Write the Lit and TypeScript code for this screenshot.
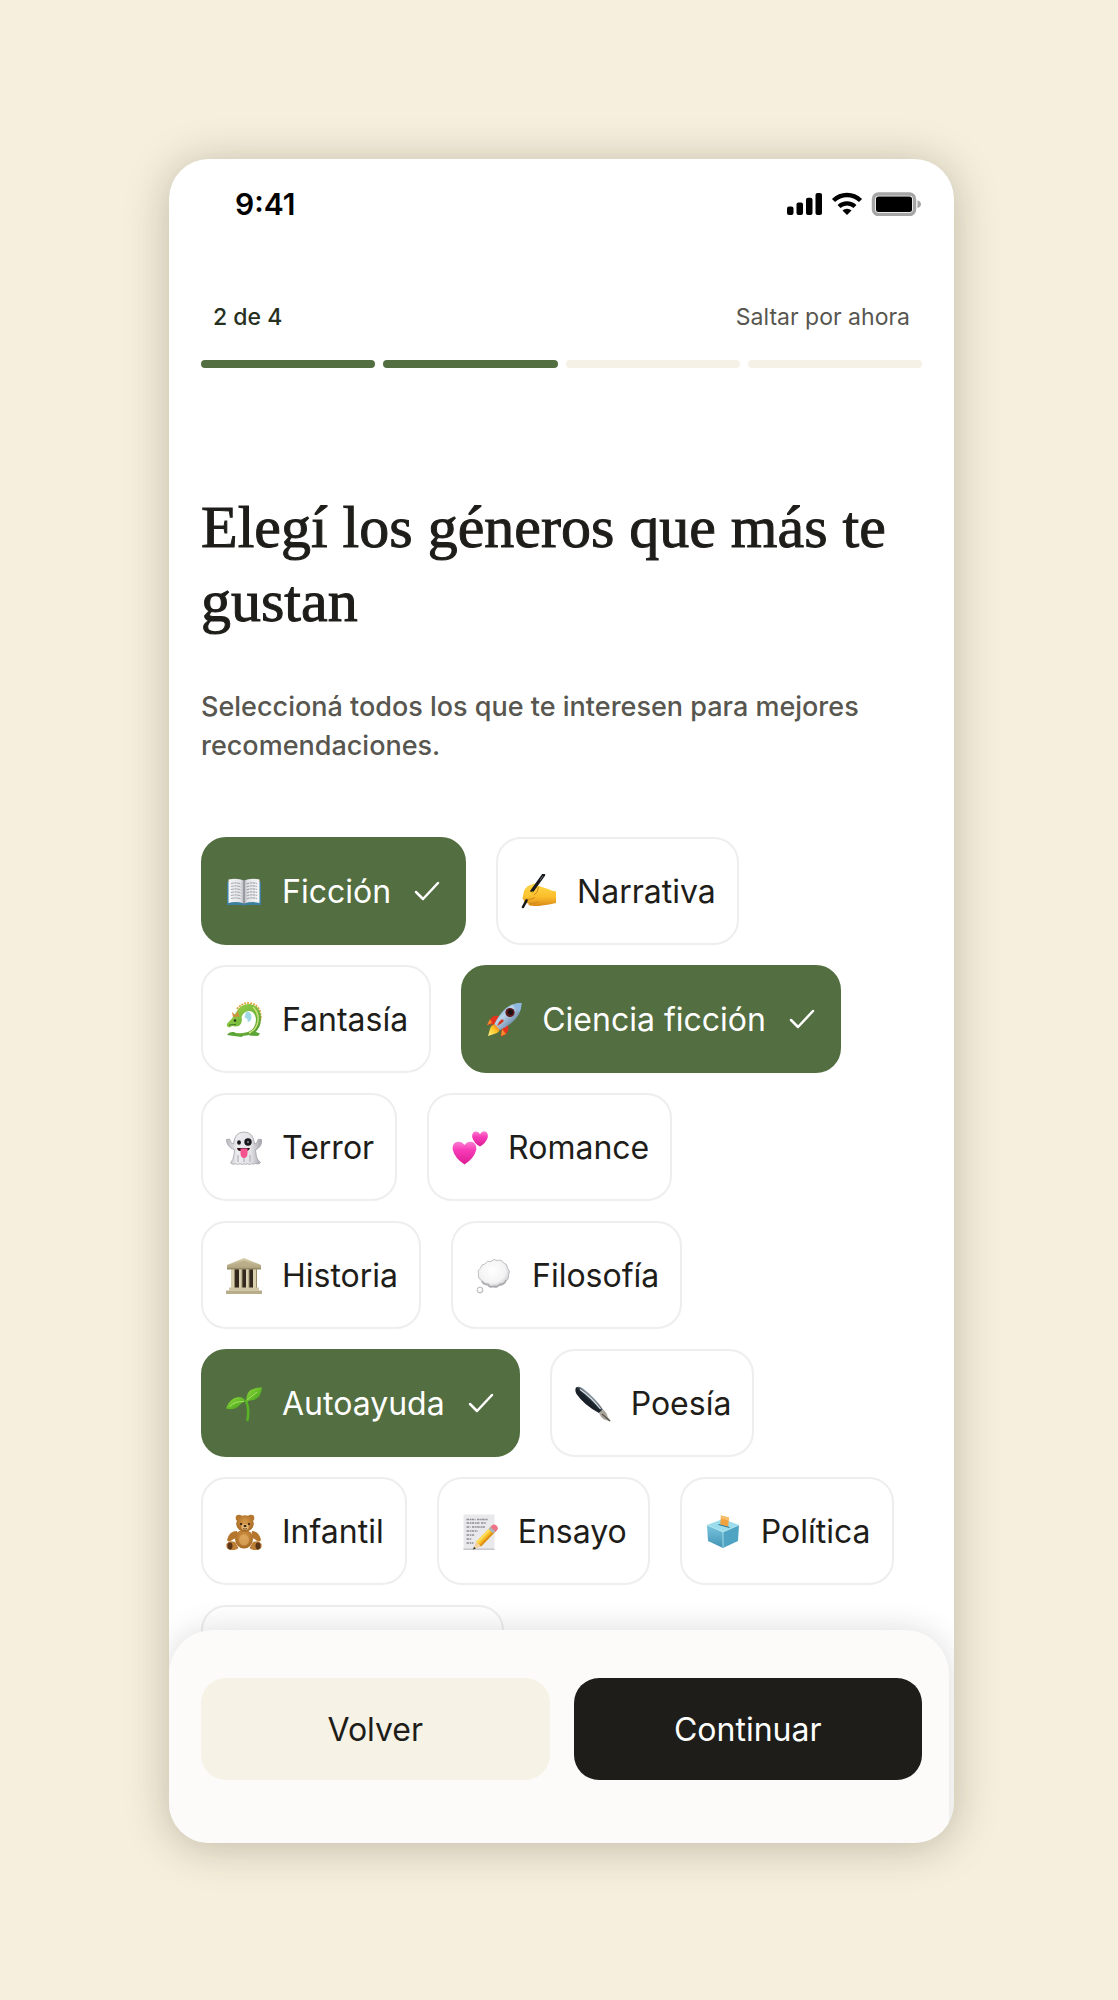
import { LitElement, html, svg, css, nothing, type SVGTemplateResult } from "lit";
import { customElement, property, state } from "lit/decorators.js";
import { classMap } from "lit/directives/class-map.js";

interface Genre {
  id: string;
  label: string;
}

const GENRE_ROWS: Genre[][] = [
  [
    { id: "book", label: "Ficción" },
    { id: "writing", label: "Narrativa" },
  ],
  [
    { id: "dragon", label: "Fantasía" },
    { id: "rocket", label: "Ciencia ficción" },
  ],
  [
    { id: "ghost", label: "Terror" },
    { id: "hearts", label: "Romance" },
  ],
  [
    { id: "temple", label: "Historia" },
    { id: "thought", label: "Filosofía" },
  ],
  [
    { id: "seedling", label: "Autoayuda" },
    { id: "pen", label: "Poesía" },
  ],
  [
    { id: "bear", label: "Infantil" },
    { id: "memo", label: "Ensayo" },
    { id: "ballot", label: "Política" },
  ],
];

const ART: Record<string, SVGTemplateResult> = {
  book: svg`
    <defs>
      <linearGradient id="pg" x1="0" x2="1"><stop offset="0" stop-color="#f4f4f6"/><stop offset=".8" stop-color="#e3e4e8"/><stop offset="1" stop-color="#a9abb2"/></linearGradient>
      <linearGradient id="pg2" x1="1" x2="0"><stop offset="0" stop-color="#f4f4f6"/><stop offset=".8" stop-color="#e3e4e8"/><stop offset="1" stop-color="#a9abb2"/></linearGradient>
    </defs>
    <path d="M1 8h34v23H20l-2 1-2-1H1z" fill="#3d7f9e"/>
    <path d="M2.500 5.500Q11 3.500 18 6.500V29.500Q10 27 2.500 29z" fill="url(#pg)"/>
    <path d="M33.500 5.500Q25 3.500 18 6.500V29.500Q26 27 33.500 29z" fill="url(#pg2)"/>
    <path d="M5 9.500q5-1.500 10.500.5M5 12.500q5-1.500 10.500.5M5 15.500q5-1.500 10.500.5M5 18.500q5-1.500 10.500.5M5 21.500q5-1.500 10.500.5M5 24.500q5-1.500 10.500.5M20.500 10q5-2 10.500-.5M20.500 13q5-2 10.500-.5M20.500 16q5-2 10.500-.5M20.500 19q5-2 10.500-.5M20.500 22q5-2 10.500-.5M20.500 25q5-2 10.500-.5" fill="none" stroke="#a6a7ad" stroke-width="1.100" stroke-dasharray="3 .6 2 .5"/>
    <path d="M18 6.500v24" stroke="#777a82" stroke-width=".9"/>`,
  writing: svg`
    <defs><linearGradient id="hd" x1="0" y1="0" x2="0" y2="1"><stop offset="0" stop-color="#ffd94a"/><stop offset=".6" stop-color="#fbbd2b"/><stop offset="1" stop-color="#d98a18"/></linearGradient></defs>
    <path d="M2 22Q3 14 7 12l6-2.500q3 0 3.500 2L27 15q3 1.500 8 2.500V29q-7 1.500-14 2.500-6 1-10 .2Q7 32 7.500 29.500 2 29 3 26 .8 25 2 22z" fill="url(#hd)"/>
    <path d="M8 29.500q5 .5 9-1.500M4 25.500q6 .5 10-2M13 21q4-2 4.500-8" fill="none" stroke="#d18a1c" stroke-width="1"/>
    <path d="M22.500 1 11 17" stroke="#17191d" stroke-width="3.300" stroke-linecap="round"/>
    <path d="M5.500 26.500 2 33" stroke="#17191d" stroke-width="2.600" stroke-linecap="round"/>
    <path d="M10 18q-4-1-6.500 4.500 2.500 2 5-.5 3-2 4-5z" fill="#fcc934"/>
    <path d="m22 2-3 4.300" stroke="#70757d" stroke-width=".9"/>`,
  dragon: svg`
    <defs><linearGradient id="dg" x1="0" y1="0" x2="1" y2="1"><stop offset="0" stop-color="#a6d64c"/><stop offset=".55" stop-color="#74b83b"/><stop offset="1" stop-color="#46902e"/></linearGradient></defs>
    <path d="M11 7Q16 .5 24 1q7 1 10 8l1 7-3 8" fill="none" stroke="#e2a53a" stroke-width="1.800" stroke-dasharray="2 1"/>
    <path d="M20 10q5-1 5.500 5 0 4-4 5.500 1-4-3-5z" fill="#9fd9e6"/>
    <path d="M11 9Q15 1.500 24 2q11 2 11 15-.5 12-10 15.500-10 3-19-.5l1-1.500q9 1.500 15-.5 7.500-3 8-12Q29.500 9.500 23 9q-6 .5-7.500 6.500 1 2.500-.5 6-1.500 3-5 3l-4-.5-2.500 1.500Q-.5 25 1.500 21L6 16.500z" fill="url(#dg)"/>
    <path d="M27 5q6 6 5 14-1.500 9-9 12" fill="none" stroke="#c9e07a" stroke-width="1.500"/>
    <path d="M7 15 6 10l4 3.500 1.500-5 2 6z" fill="#d78b43"/>
    <path d="M1 33q2-3.500 7-3l3 2.500 6 .5-1 2-8-1z" fill="#5aa535"/>
    <path d="M27 29l7 2.500-2 2.500-9-.5z" fill="#5aa535"/>
    <circle cx="9" cy="18.500" r="1.200" fill="#23301a"/>
    <path d="M3 23q4-.5 7-.5" fill="none" stroke="#3d6f25" stroke-width=".9"/>`,
  rocket: svg`
    <defs><linearGradient id="rk" x1="0" y1="0" x2="1" y2="1"><stop offset="0" stop-color="#3f6f9f"/><stop offset=".4" stop-color="#b9d5ec"/><stop offset=".65" stop-color="#7f9cba"/><stop offset="1" stop-color="#34506f"/></linearGradient>
    <linearGradient id="fl" x1="1" y1="0" x2="0" y2="1"><stop offset="0" stop-color="#f7581c"/><stop offset=".5" stop-color="#ffc928"/><stop offset="1" stop-color="#fff08a"/></linearGradient></defs>
    <path d="M13 14q-7-1-9 4l-3 5 8-1zM22 23q1.500 6-2 9l-5 3 1-9z" fill="#e5341d"/>
    <path d="M4 17 1 23l5-2zM16 27l-1 7 5-2z" fill="#f58b2a"/>
    <path d="M9 22q-4 1-5 5L2 34l6-2q5-1 6-5z" fill="url(#fl)"/>
    <path d="M35.500 1Q24 1 17 9q-6 7-8.500 13L14 28q7-3 13-8.500Q35.500 12 35.500 1z" fill="url(#rk)"/>
    <path d="M35.500 1q-5 0-9 2l7 7q2-4 2-9z" fill="#8eb6df"/>
    <circle cx="24" cy="10.500" r="4.600" fill="#5d1a1c"/><circle cx="24.400" cy="10.200" r="2.600" fill="#1b1113"/>
    <path d="M16 17q-4 3-5 7 3-1 7-5z" fill="#d6381f"/>`,
  ghost: svg`
    <defs><linearGradient id="gh" x1="0" y1="0" x2="1" y2="0"><stop offset="0" stop-color="#b9b9bf"/><stop offset=".3" stop-color="#ededf0"/><stop offset=".7" stop-color="#e2e2e6"/><stop offset="1" stop-color="#a3a3aa"/></linearGradient></defs>
    <path d="M18 2q9.500 0 10.500 12 3-.5 3.500-4.500 2-.5 3.500 0 1 7-6 10.500l1 7q1.500 4 4 5.500-2 2.500-5 1-1.500 1-4 .3-2 1.200-4 0-2 1-3.500 0-2 1.200-4 0-2.500 1-4.500 0-3 1.500-5-1 3-3 3.500-8l.5-5Q.5 17 .5 9.500q2-.8 3.500 0 .5 4 3.500 4.500Q8.500 2 18 2z" fill="url(#gh)" stroke="#9a9aa1" stroke-width=".7"/>
    <path d="M12 25v7M18 27v5M24 25v7" stroke="#bcbcc3" stroke-width="1.500"/>
    <ellipse cx="13" cy="12.500" rx="1.900" ry="2.300" fill="#17171a"/><circle cx="22" cy="12" r="3.700" fill="#17171a"/><circle cx="22" cy="12" r="1.200" fill="#74747b"/>
    <path d="M11 18h13q-1 3-3 3h-7q-2.500 0-3-3z" fill="#301014"/>
    <path d="M14.500 18.500h7V24q-.5 4-3.500 4t-3.500-4z" fill="#f5538d"/>`,
  hearts: svg`
    <defs><linearGradient id="ht" x1="0" y1="0" x2="0" y2="1"><stop offset="0" stop-color="#fb7fd2"/><stop offset=".35" stop-color="#f83db8"/><stop offset="1" stop-color="#dd1b95"/></linearGradient></defs>
    <path d="M12.500 34.500Q3 28.500.8 20-.3 13 5.500 11.700q4.500-.5 7 3.300 2.500-3.800 7-3.300Q25 13 24.200 20 22 28.500 12.500 34.500z" fill="url(#ht)"/>
    <path d="M28 16.500Q22 13.500 20.300 7.500 19.500 2.500 23.300 1.500 26.500 1 28 4q2-3.200 5-2.500 3.500 1 2.700 6Q34 13 28 16.500z" fill="url(#ht)"/>`,
  temple: svg`
    <defs><linearGradient id="st" x1="0" x2="0" y1="0" y2="1"><stop offset="0" stop-color="#d8cfae"/><stop offset="1" stop-color="#aca07a"/></linearGradient></defs>
    <path d="M5 10h26v20H5z" fill="#33291e"/>
    <path d="M18 0 35 7v3.500H1V7z" fill="url(#st)"/>
    <path d="M18 2.500 30 7.500H6z" fill="#b9ae89"/>
    <path d="M5 11h4v19H5zM13 11h3v19h-3zM20 11h3v19h-3zM27 11h4v19h-4z" fill="#d9d0b0"/>
    <path d="M8 11h1v19H8zM15.500 11h1v19h-1zM22.500 11h1v19h-1zM30 11h1v19h-1z" fill="#978b67"/>
    <path d="M3 29.500h30v3H3z" fill="#cfc5a2"/><path d="M0 32.500h36V36H0z" fill="#b8ad88"/><path d="M1 10h34v1.500H1z" fill="#978b67"/>`,
  thought: svg`
    <defs><radialGradient id="cl" cx=".45" cy=".4" r=".6"><stop offset="0" stop-color="#fff"/><stop offset=".7" stop-color="#f3f3f4"/><stop offset="1" stop-color="#c9c9cc"/></radialGradient></defs>
    <path d="M9 6q2-4 6-2.500 3-3.500 6-1 5-1.500 6.500 2.500 4 .5 4 5 3.500 3 1 7 .5 5-3.500 6.500-1.500 4.500-5.500 4-3 3.500-6.500 1.500-4 1.500-6-2-5 0-5.500-4.500-4-2-3-6.500-1.500-4 2-6Q5 6 9 6z" fill="url(#cl)" stroke="#b5b5ba" stroke-width=".8"/>
    <path d="M6 23q2 4 6 3 2 4 6 2 4 1.500 6-2 5 .5 6-4" fill="none" stroke="#a5a5aa" stroke-width="1.200"/>
    <circle cx="4" cy="32" r="2.900" fill="url(#cl)" stroke="#aaaab0" stroke-width=".8"/>`,
  seedling: svg`
    <defs><linearGradient id="lf" x1="0" y1="0" x2="1" y2="1"><stop offset="0" stop-color="#8fdc3a"/><stop offset="1" stop-color="#3f9c1b"/></linearGradient></defs>
    <path d="M20 15q3.500 8 1.500 19" fill="none" stroke="#58b424" stroke-width="2.600" stroke-linecap="round"/>
    <path d="M20 16Q20 5 27 3q5-2 9-1.500Q35 12 28 14q-4 0-8 2z" fill="url(#lf)"/>
    <path d="M20 15Q15 8.500 7.500 12.500 2 16 0 22.500q8 2 12.500-2 2.500-4 7.500-5.500z" fill="url(#lf)"/>
    <path d="m21 14 10-8M18 15.500Q9 15 3.500 20.500" fill="none" stroke="#b5ec6c" stroke-width=".8"/>`,
  pen: svg`
    <defs><linearGradient id="pn" x1="1" y1="0" x2="0" y2="1"><stop offset="0" stop-color="#2d3a45"/><stop offset=".35" stop-color="#c9d7df"/><stop offset=".5" stop-color="#1b232b"/><stop offset="1" stop-color="#0c1014"/></linearGradient></defs>
    <path d="M1 1.500q3-2 7 1Q20 11 28 23.500l-4 3.500Q9 19 1.500 8q-2-4-.5-6.500z" fill="url(#pn)"/>
    <path d="M5 3.500Q16 11 25.500 23" fill="none" stroke="#dfe9ee" stroke-width="1.100"/>
    <path d="m24 27 4-3.500q4 3 4.500 7l3.500 5-7-2q-3.500-2-5-6.500z" fill="#a9a69c"/><path d="m27 28 8 7" stroke="#55534c" stroke-width="1.200"/>`,
  bear: svg`
    <defs><radialGradient id="br" cx=".5" cy=".4" r=".65"><stop offset="0" stop-color="#d99a4c"/><stop offset="1" stop-color="#a0641f"/></radialGradient></defs>
    <circle cx="13" cy="4" r="3.300" fill="#b5762e"/><circle cx="25" cy="4" r="3.300" fill="#b5762e"/>
    <path d="M11 17Q3 17 1 26q2 3 5 0l6-3zM26 17q7 0 9 9-2 3-5 0l-5-3z" fill="#b5762e"/>
    <ellipse cx="18" cy="25" rx="9" ry="9.500" fill="url(#br)"/>
    <path d="M9 28q-6-2-8.500 2-1 5 4 6 6 .5 8-2zM27 28q6-2 8.500 2 1 5-4 6-6 .5-8-2z" fill="#bd7e36"/>
    <ellipse cx="4" cy="32" rx="2.500" ry="3.400" fill="#5b3517"/><ellipse cx="32" cy="32" rx="2.500" ry="3.400" fill="#5b3517"/>
    <ellipse cx="19" cy="9.500" rx="8.800" ry="8.300" fill="url(#br)"/>
    <ellipse cx="19" cy="13" rx="3.700" ry="3" fill="#e4b778"/>
    <circle cx="15" cy="10" r="1" fill="#26160b"/><circle cx="23" cy="10" r="1" fill="#26160b"/><ellipse cx="19" cy="11.900" rx="1.500" ry="1" fill="#26160b"/>
    <path d="M17 14.500q2 1.300 4 0" fill="none" stroke="#55330f" stroke-width=".8"/><ellipse cx="18" cy="26" rx="5" ry="5.500" fill="#e0aa62" opacity=".7"/>`,
  memo: svg`
    <path d="M1.500.5h31v35.500h-31z" fill="#e9e9ec"/><path d="M1.500 34.500h31V36h-31z" fill="#c7c7cc"/>
    <path d="M4.500 5.500h9M15 5.500h11M4.500 9h13M19 9h5M4.500 13h4M10 13h13M4.500 17h11M4.500 21h8M4.500 25h5M4.500 29h7" stroke="#8d8d95" stroke-width="1.300" stroke-dasharray="2.500 .7 1.500 .5"/>
    <path d="m14 28 15-15.500 5 4.500-15 15.500z" fill="#f9bd27"/><path d="m14 28 15-15.500 1.800 1.600-15 15.500z" fill="#ffdc5a"/><path d="m17.500 31 15-15.500 1.500 1.500-15 15.500z" fill="#dd9016"/>
    <path d="m26.500 15 3.500-3.600 4.800 4.500-3.500 3.600z" fill="#aab4bb"/><path d="M28.500 13 31 10.500q4.500-.5 5 4.500l-2.500 2.700z" fill="#ee7387"/>
    <path d="m14 28 5 4.500-8 3z" fill="#f0d3a0"/><path d="m12 32.800 1.800 1.700-2.800 1z" fill="#2a2a2d"/>`,
  ballot: svg`
    <defs><linearGradient id="bx" x1="0" y1="0" x2="0" y2="1"><stop offset="0" stop-color="#78c5de"/><stop offset="1" stop-color="#4393b5"/></linearGradient></defs>
    <path d="m2 11 16-6 16 6-16 7z" fill="#9bdcec"/><path d="m2 11 16 7v16L3 27z" fill="url(#bx)"/><path d="m34 11-16 7v16l15-7z" fill="#4fa3c3"/>
    <path d="m2 11 16 7 16-7M18 18v15" fill="none" stroke="#b6e8f2" stroke-width=".8"/>
    <path d="m16 1.500 8 2-.8 9.500-8-2.500z" fill="#f2a341"/><path d="m16 1.500 8 2-.2 3-8-2z" fill="#f8bd68"/><path d="m13.500 10.500 11 3" stroke="#2f7591" stroke-width="1"/>`,
};

@customElement("genre-art")
class GenreArt extends LitElement {
  @property() name = "";

  static styles = css`
    :host {
      display: block;
      flex: none;
      width: 36px;
      height: 36px;
    }
    .art {
      display: block;
      width: 100%;
      height: 100%;
    }
  `;

  render() {
    return html`<svg class="art" viewBox="0 0 36 36" aria-hidden="true">${ART[this.name]}</svg>`;
  }
}

@customElement("app-root")
class AppRoot extends LitElement {
  @state() private selected = new Set(["book", "rocket", "seedling"]);

  private toggle(id: string) {
    const next = new Set(this.selected);
    if (!next.delete(id)) next.add(id);
    this.selected = next;
  }

  static styles = css`
    :host {
      display: block;
      box-sizing: border-box;
      min-height: 100vh;
      padding: 159px 164px 157px 169px;
      background: #f6efdd;
      color: #1e1d19;
      font-family: Inter, "Liberation Sans", sans-serif;
    }
    * {
      box-sizing: border-box;
    }
    button {
      font: inherit;
      color: inherit;
      cursor: pointer;
    }
    .phone {
      overflow: hidden;
      border-radius: 40px;
      background: #fff;
      box-shadow: 0 4px 44px rgba(45, 42, 20, 0.28);
    }
    .status {
      display: flex;
      align-items: center;
      justify-content: space-between;
      padding: 25px 33px 0 66px;
      color: #000;
    }
    .clock {
      font-size: 30px;
      line-height: 40px;
      font-weight: 600;
    }
    .signals {
      display: flex;
      align-items: center;
      gap: 8px;
    }
    .signals svg {
      display: block;
    }
    .body {
      padding: 0 32px;
    }
    .steps {
      display: flex;
      justify-content: space-between;
      padding: 77px 12px 0;
      font-size: 23px;
      line-height: 32px;
    }
    .count {
      color: #26301f;
      font-weight: 500;
    }
    .skip {
      color: #57564f;
      text-decoration: none;
    }
    .progress {
      display: grid;
      grid-template-columns: repeat(4, 1fr);
      gap: 8px;
      margin-top: 27px;
    }
    .bar {
      height: 8px;
      border-radius: 4px;
      background: #f5f1e6;
    }
    .bar.done {
      background: #536e40;
    }
    h1 {
      margin: 122px 0 0;
      font-family: "Liberation Serif", serif;
      font-size: 60px;
      line-height: 74px;
      font-weight: 400;
      -webkit-text-stroke: 1px currentColor;
    }
    .lead {
      margin: 49px 0 0;
      color: #57564f;
      font-size: 27px;
      line-height: 39px;
      font-weight: 450;
    }
    .genres {
      display: grid;
      gap: 20px;
      margin-top: 72px;
    }
    .row {
      display: flex;
      gap: 30px;
    }
    .chip {
      display: flex;
      align-items: center;
      gap: 20px;
      height: 108px;
      padding: 2px 21px 0 23px;
      border: 2px solid #efedee;
      border-radius: 25px;
      background: #fff;
      font-size: 32px;
      line-height: 40px;
      white-space: nowrap;
    }
    .chip.on {
      border-color: #536e40;
      background: #536e40;
      color: #fff;
    }
    .chip.next {
      width: 42%;
    }
    .check {
      display: block;
      flex: none;
    }
    .actions {
      position: relative;
      display: grid;
      grid-template-columns: 1fr 1fr;
      gap: 24px;
      margin: -83px 5px 0 0;
      padding: 48px 27px 63px 32px;
      border-radius: 44px 44px 0 0;
      background: #fcfbf9;
      box-shadow: 0 0 32px rgba(0, 0, 0, 0.14);
    }
    .action {
      height: 102px;
      padding: 2px 0 0;
      border: 0;
      border-radius: 25px;
      background: #f6f2e6;
      font-size: 32px;
      line-height: 40px;
    }
    .action.primary {
      background: #1e1d19;
      color: #fff;
    }
  `;

  private chip({ id, label }: Genre) {
    const on = this.selected.has(id);
    return html`
      <button
        type="button"
        class=${classMap({ chip: true, on })}
        aria-pressed=${on ? "true" : "false"}
        @click=${() => this.toggle(id)}
      >
        <genre-art name=${id}></genre-art>
        <span>${label}</span>
        ${on
          ? html`<svg class="check" width="32" height="32" viewBox="0 0 32 32" aria-hidden="true">
              <path d="M5 16l7 7L27 7" fill="none" stroke="#fff" stroke-width="2.500" stroke-linecap="round" stroke-linejoin="round" />
            </svg>`
          : nothing}
      </button>
    `;
  }

  render() {
    return html`
      <main class="phone">
        <div class="status">
          <span class="clock">9:41</span>
          <span class="signals">
            <svg width="36" height="24" viewBox="0 0 36 24" aria-hidden="true">
              <rect x="0" y="14.500" width="6.500" height="8.500" rx="2" />
              <rect x="9.500" y="10.500" width="6.500" height="12.500" rx="2" />
              <rect x="19" y="5.800" width="6.500" height="17.200" rx="2" />
              <rect x="28.500" y="1" width="6.500" height="22" rx="2" />
            </svg>
            <svg width="32" height="24" viewBox="0 0 32 24" aria-hidden="true">
              <path d="M2.500 8.500a19.500 19.500 0 0 1 27 0" fill="none" stroke="#000" stroke-width="4.500" />
              <path d="M8 14.500a11.600 11.600 0 0 1 16 0" fill="none" stroke="#000" stroke-width="4.200" />
              <path d="M11.500 18.500a6.500 6.500 0 0 1 9 0L16 23z" />
            </svg>
            <svg width="50" height="24" viewBox="0 0 50 24" aria-hidden="true">
              <rect x="2.500" y="2" width="41" height="20.500" rx="5" fill="none" stroke="#a6a6a6" stroke-width="3.500" />
              <rect x="5" y="4.500" width="36" height="15.500" rx="2.500" />
              <path d="M46.500 8.500q3.500 1 3.500 3.800t-3.500 3.700z" fill="#a6a6a6" />
            </svg>
          </span>
        </div>
        <div class="body">
          <div class="steps">
            <span class="count">2 de 4</span>
            <a class="skip" href="#inicio">Saltar por ahora</a>
          </div>
          <div class="progress" role="progressbar" aria-label="2 de 4" aria-valuemin="0" aria-valuemax="4" aria-valuenow="2">
            ${[1, 2, 3, 4].map((n) => html`<span class=${classMap({ bar: true, done: n <= 2 })}></span>`)}
          </div>
          <h1>Elegí los géneros que más te gustan</h1>
          <p class="lead">Seleccioná todos los que te interesen para mejores recomendaciones.</p>
          <div class="genres">
            ${GENRE_ROWS.map((row) => html`<div class="row">${row.map((g) => this.chip(g))}</div>`)}
            <div class="row"><div class="chip next"></div></div>
          </div>
        </div>
        <footer class="actions">
          <button type="button" class="action">Volver</button>
          <button type="button" class="action primary">Continuar</button>
        </footer>
      </main>
    `;
  }
}
